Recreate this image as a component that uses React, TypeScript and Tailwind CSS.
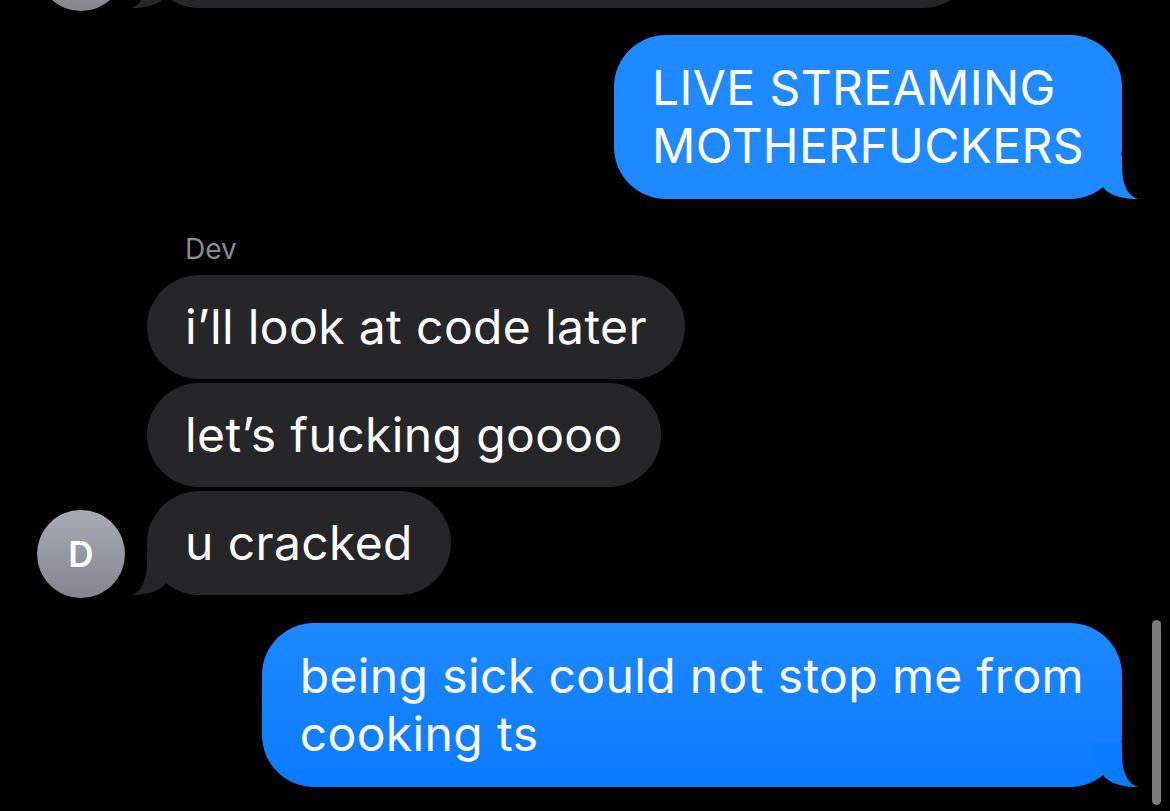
import React from 'react';

type Side = 'in' | 'out';

const font = { fontFamily: 'Inter, "Noto Sans", sans-serif' };

// iMessage-style tail, drawn for the right side; mirrored for incoming bubbles
const Tail: React.FC<{ side: Side; className: string }> = ({ side, className }) => (
  <svg
    width="46"
    height="44"
    viewBox="0 0 46 44"
    className={
      side === 'out'
        ? `absolute -right-[16px] bottom-0 ${className}`
        : `absolute -left-[16px] bottom-0 -scale-x-100 ${className}`
    }
  >
    <path d="M30 0 L30 8 C30 28 34 40 46 44 C36 44.5 18 42 11 32 L0 20 L0 0 Z" fill="currentColor" />
  </svg>
);

const Bubble: React.FC<{
  side: Side;
  tail?: boolean;
  blueClass?: string;
  tailClass?: string;
  className?: string;
  children?: React.ReactNode;
}> = ({ side, tail, blueClass = 'bg-[#1f8aff]', tailClass = 'text-[#1f8aff]', className = '', children }) => (
  <div
    className={`relative rounded-[52px] px-[38px] text-[48px] leading-[58px] tracking-[0.008em] text-white ${
      side === 'out' ? blueClass : 'bg-[#262629]'
    } ${className}`}
  >
    {children}
    {tail && <Tail side={side} className={side === 'out' ? tailClass : 'text-[#262629]'} />}
  </div>
);

const Avatar: React.FC<{ letter?: string }> = ({ letter }) => (
  <div className="w-[88px] h-[88px] shrink-0 -mb-[3px] rounded-full bg-gradient-to-b from-[#a7abb5] to-[#83868f] flex items-center justify-center text-white text-[35px] font-semibold">
    {letter}
  </div>
);

export default function App() {
  return (
    <div className="relative w-[1170px] h-[811px] overflow-hidden bg-black" style={font}>
      <div className="flex flex-col">
        {/* previous message, mostly scrolled out of view */}
        <div className="-mt-[96px] flex items-end pl-[37px] gap-[22px]">
          <Avatar />
          <Bubble side="in" tail className="w-[828px] h-[104px]" />
        </div>

        <div className="mt-[27px] flex justify-end pr-[48px]">
          <Bubble side="out" tail className="py-[24px]">
            LIVE STREAMING
            <br />
            MOTHERFUCKERS
          </Bubble>
        </div>

        <div className="mt-[33px] pl-[185px] text-[28px] leading-[34px] text-[#8b8b90]">Dev</div>

        <div className="mt-[9px] pl-[147px] flex">
          <Bubble side="in" className="py-[23px]">i’ll look at code later</Bubble>
        </div>
        <div className="mt-[4px] pl-[147px] flex">
          <Bubble side="in" className="py-[23px]">let’s fucking goooo</Bubble>
        </div>
        <div className="mt-[4px] flex items-end pl-[37px] gap-[22px]">
          <Avatar letter="D" />
          <Bubble side="in" tail className="py-[23px]">u cracked</Bubble>
        </div>

        <div className="mt-[28px] flex justify-end pr-[48px]">
          <Bubble
            side="out"
            tail
            blueClass="bg-gradient-to-b from-[#1d88ff] to-[#0a7bff]"
            tailClass="text-[#0a7bff]"
            className="py-[24px]"
          >
            being sick could not stop me from
            <br />
            cooking ts
          </Bubble>
        </div>
      </div>

      {/* scroll indicator */}
      <div className="absolute left-[1152px] top-[620px] w-[9px] h-[185px] rounded-full bg-[#7d7d7d]" />
    </div>
  );
}
